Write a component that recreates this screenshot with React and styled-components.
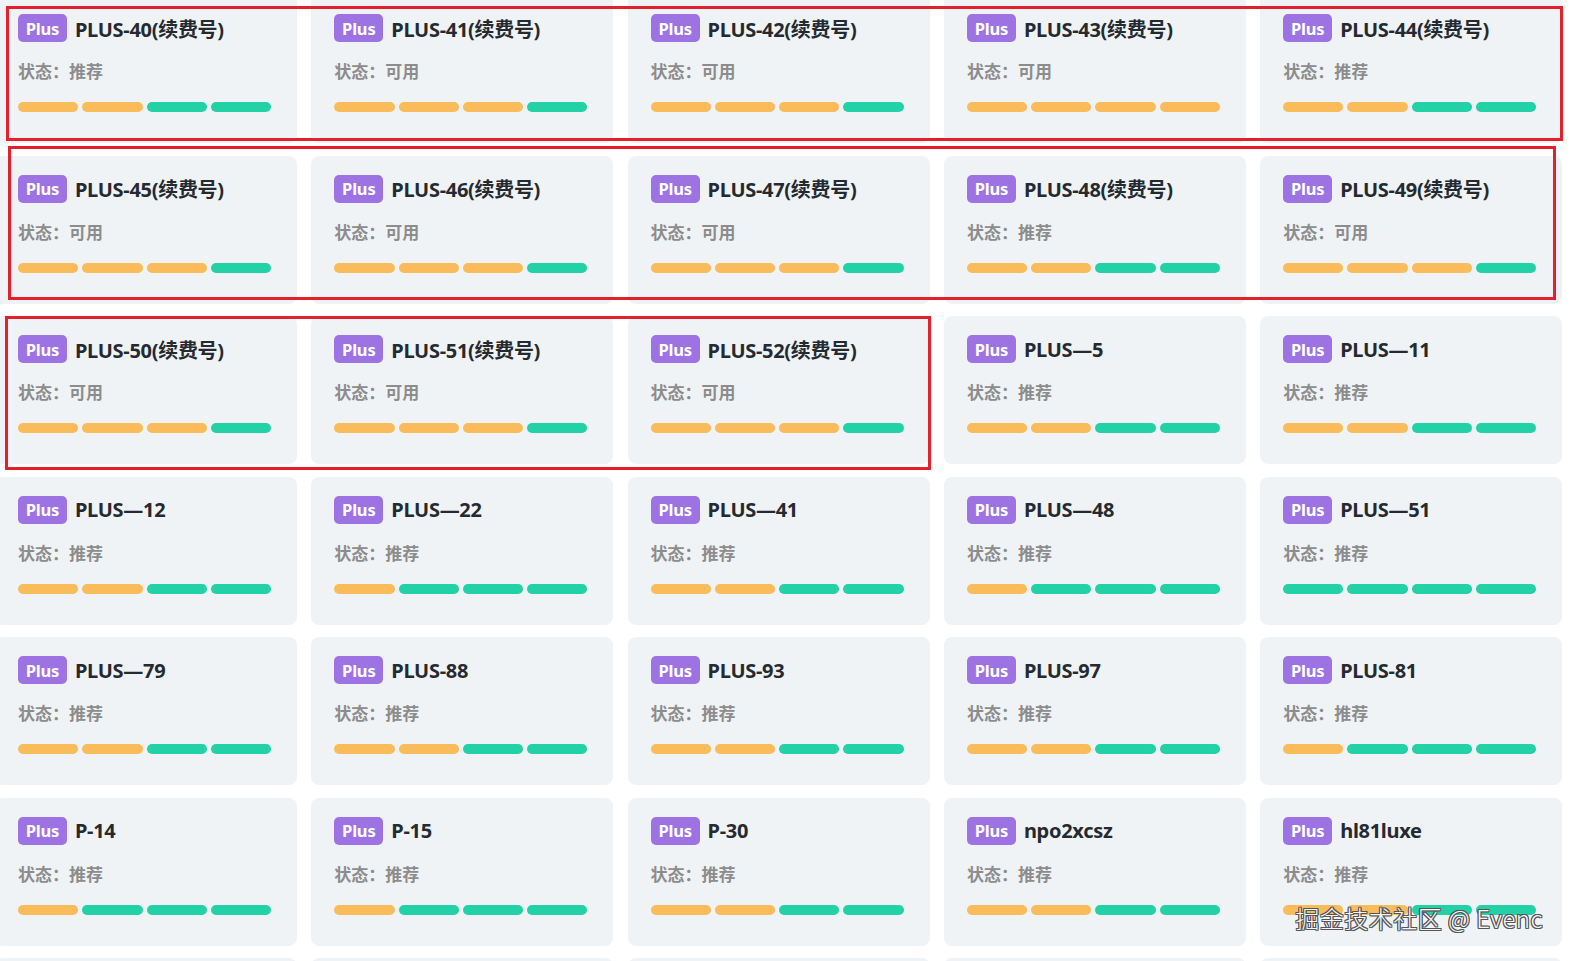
import React from "react";
import styled, { createGlobalStyle } from "styled-components";

const GlobalStyle = createGlobalStyle`
  html, body {
    margin: 0;
    padding: 0;
    background: #ffffff;
    overflow: hidden;
  }
  body {
    font-family: "Noto Sans", "Noto Sans CJK SC", sans-serif;
  }
`;

const Page = styled.div`
  position: relative;
  width: 1573px;
  height: 961px;
  overflow: hidden;
`;

const Grid = styled.div`
  display: grid;
  grid-template-columns: repeat(5, 302px);
  column-gap: 14.3px;
  row-gap: 12.5px;
  margin: -5px 0 0 -5px;
`;

const Card = styled.div`
  box-sizing: border-box;
  height: 148px;
  padding: 19px 23px 30px;
  background: #f0f3f6;
  border-radius: 8px;
  display: flex;
  flex-direction: column;
`;

const TitleRow = styled.div`
  display: flex;
  align-items: center;
  gap: 8px;
  height: 28px;
`;

const Badge = styled.span`
  box-sizing: border-box;
  height: 28px;
  width: 49px;
  display: inline-flex;
  align-items: center;
  justify-content: center;
  background: #9d73e3;
  color: #ffffff;
  border-radius: 5px;
  font-size: 16.5px;
  font-weight: 700;
  letter-spacing: -0.2px;
`;

const Title = styled.span`
  font-size: 20px;
  font-weight: 700;
  color: #252a31;
  letter-spacing: -0.3px;
  white-space: nowrap;
`;

const Status = styled.div`
  margin-top: 17px;
  height: 24px;
  line-height: 24px;
  font-family: "Noto Sans CJK SC", sans-serif;
  font-size: 17px;
  font-weight: 700;
  color: #8c8c8c;
`;

const Bars = styled.div`
  margin-top: 19px;
  width: 253px;
  display: grid;
  grid-template-columns: repeat(4, 1fr);
  gap: 4px;
`;

const Bar = styled.span`
  height: 10px;
  border-radius: 5px;
  background: ${(p) => (p.$tone === "g" ? "#22d2a6" : "#fabb5b")};
`;

const Mark = styled.div`
  position: absolute;
  box-sizing: border-box;
  border: 3.5px solid #e3202b;
  pointer-events: none;
`;

const Watermark = styled.div`
  position: absolute;
  right: 30px;
  bottom: 26px;
  font-family: "Noto Sans CJK SC", sans-serif;
  font-size: 24px;
  font-weight: 300;
  color: #f7f7f7;
  letter-spacing: 0.5px;
  text-shadow: 1px 1px 0 #555, -1px -1px 0 #555, 1px -1px 0 #555,
    -1px 1px 0 #555, 1px 0 0 #555, -1px 0 0 #555, 0 1px 0 #555, 0 -1px 0 #555;
`;

const accounts = [
  ["PLUS-40(续费号)", "推荐", "oogg"],
  ["PLUS-41(续费号)", "可用", "ooog"],
  ["PLUS-42(续费号)", "可用", "ooog"],
  ["PLUS-43(续费号)", "可用", "oooo"],
  ["PLUS-44(续费号)", "推荐", "oogg"],
  ["PLUS-45(续费号)", "可用", "ooog"],
  ["PLUS-46(续费号)", "可用", "ooog"],
  ["PLUS-47(续费号)", "可用", "ooog"],
  ["PLUS-48(续费号)", "推荐", "oogg"],
  ["PLUS-49(续费号)", "可用", "ooog"],
  ["PLUS-50(续费号)", "可用", "ooog"],
  ["PLUS-51(续费号)", "可用", "ooog"],
  ["PLUS-52(续费号)", "可用", "ooog"],
  ["PLUS—5", "推荐", "oogg"],
  ["PLUS—11", "推荐", "oogg"],
  ["PLUS—12", "推荐", "oogg"],
  ["PLUS—22", "推荐", "oggg"],
  ["PLUS—41", "推荐", "oogg"],
  ["PLUS—48", "推荐", "oggg"],
  ["PLUS—51", "推荐", "gggg"],
  ["PLUS—79", "推荐", "oogg"],
  ["PLUS-88", "推荐", "oogg"],
  ["PLUS-93", "推荐", "oogg"],
  ["PLUS-97", "推荐", "oogg"],
  ["PLUS-81", "推荐", "oggg"],
  ["P-14", "推荐", "oggg"],
  ["P-15", "推荐", "oggg"],
  ["P-30", "推荐", "oogg"],
  ["npo2xcsz", "推荐", "oogg"],
  ["hl81luxe", "推荐", "oogg"],
  ["P-31", "推荐", "oogg"],
  ["P-32", "推荐", "oogg"],
  ["P-33", "推荐", "oogg"],
  ["P-34", "推荐", "oogg"],
  ["P-35", "推荐", "oogg"],
];

function AccountCard({ name, state, bars }) {
  return (
    <Card>
      <TitleRow>
        <Badge>Plus</Badge>
        <Title>{name}</Title>
      </TitleRow>
      <Status>状态：{state}</Status>
      <Bars>
        {bars.split("").map((t, i) => (
          <Bar key={i} $tone={t} />
        ))}
      </Bars>
    </Card>
  );
}

export default function App() {
  return (
    <Page>
      <GlobalStyle />
      <Grid>
        {accounts.map(([name, state, bars]) => (
          <AccountCard key={name} name={name} state={state} bars={bars} />
        ))}
      </Grid>
      <Mark style={{ left: 6, top: 6, width: 1557, height: 135 }} />
      <Mark style={{ left: 8, top: 146, width: 1548, height: 154 }} />
      <Mark style={{ left: 5, top: 316, width: 926, height: 154 }} />
      <Watermark>掘金技术社区 @ Evenc</Watermark>
    </Page>
  );
}
